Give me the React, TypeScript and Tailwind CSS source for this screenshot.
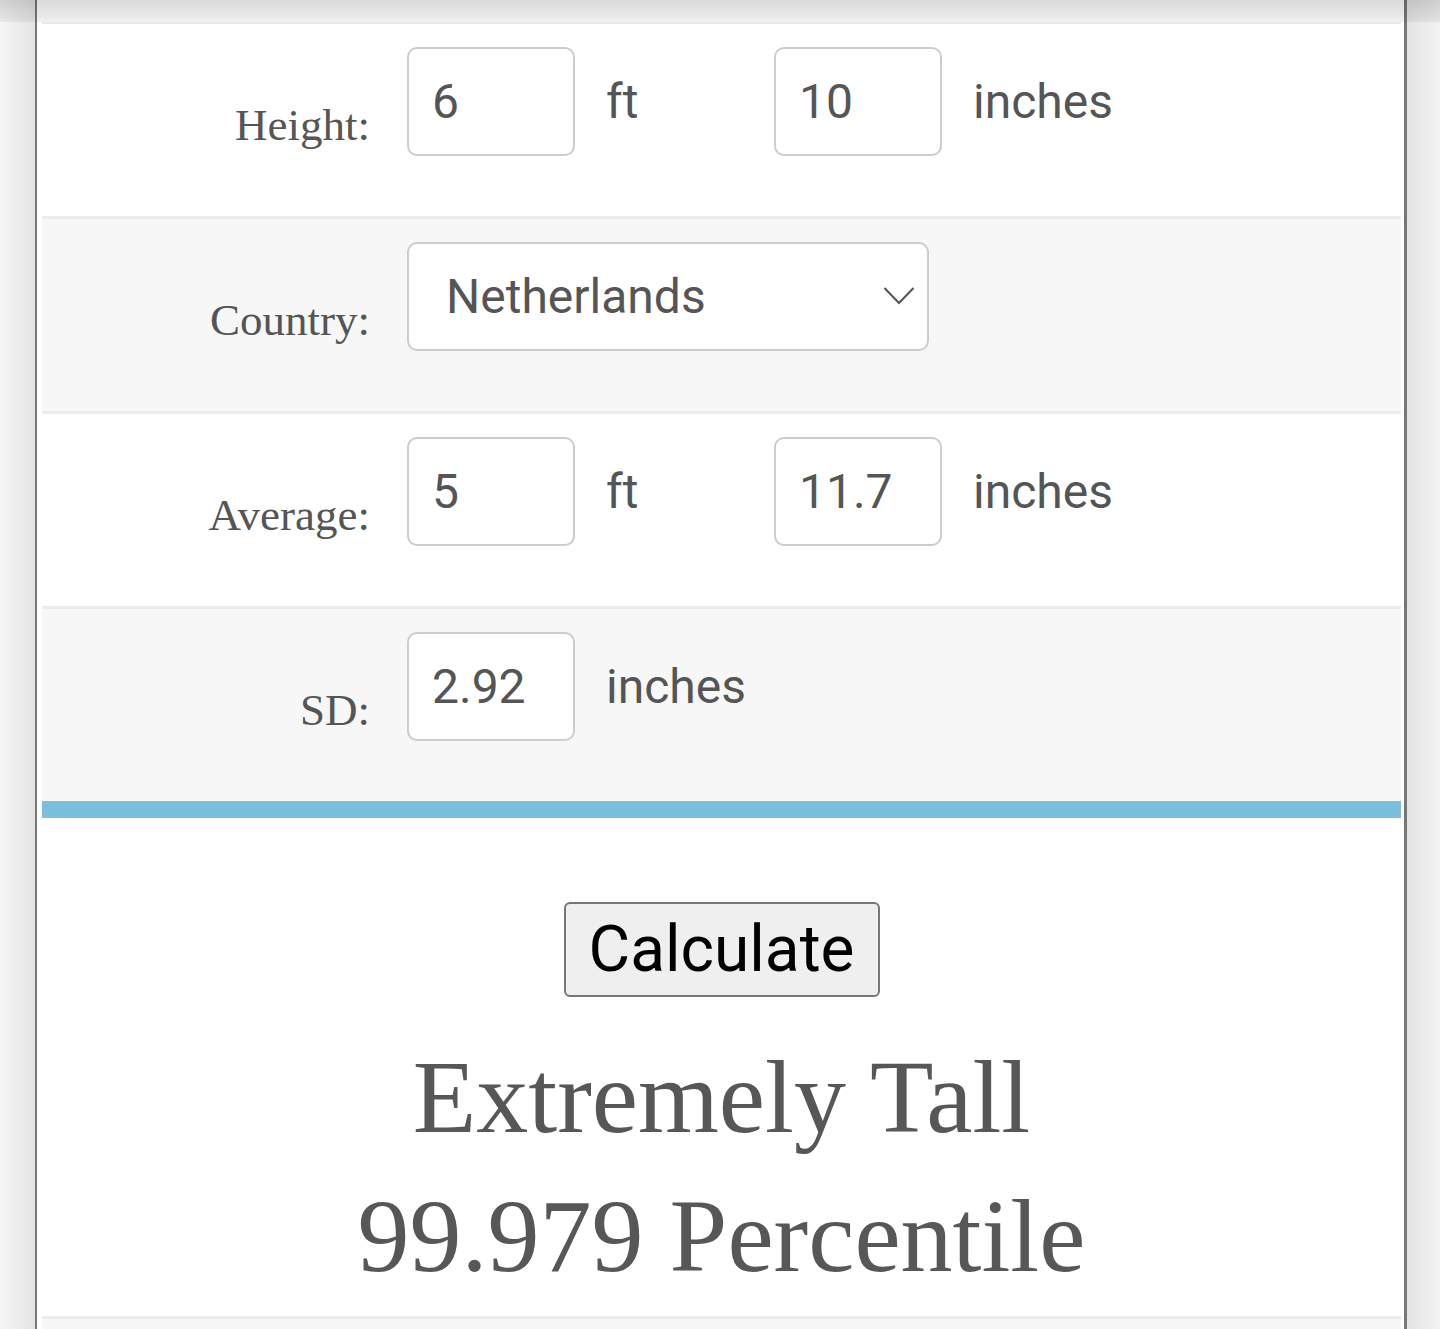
import React from "react";

const serif = { fontFamily: '"Liberation Serif", "Times New Roman", serif' } as const;
const sans = { fontFamily: 'Roboto, "Liberation Sans", Arial, sans-serif' } as const;

function Label({ text }: { text: string }) {
  return (
    <div
      className="w-[328px] shrink-0 text-right text-[45px] leading-[45px] text-[#555555] mt-[56px] pr-[-2px]"
      style={serif}
    >
      {text}
    </div>
  );
}

function Box({ value }: { value: string }) {
  return (
    <div
      className="w-[168px] h-[109px] shrink-0 rounded-[10px] border-2 border-[#cccccc] bg-white flex items-center pl-[23px] text-[48px] text-[#555555]"
      style={sans}
    >
      {value}
    </div>
  );
}

function Unit({ text, w }: { text: string; w?: string }) {
  return (
    <div className={`flex items-center h-[109px] pl-[31px] text-[48px] text-[#555555] ${w ?? ""}`} style={sans}>
      {text}
    </div>
  );
}

function Row({
  label,
  bg,
  first,
  children,
}: {
  label: string;
  bg: string;
  first?: boolean;
  children: React.ReactNode;
}) {
  return (
    <div
      className={`${first ? "h-[194px] border-t-2 border-[#e9e9e9]" : "h-[195px] border-t-[3px] border-[#ececec]"} ${bg} flex items-start pt-[23px]`}
    >
      <Label text={label} />
      <div className="ml-[37px] flex items-center">{children}</div>
    </div>
  );
}

export default function App() {
  return (
    <div className="relative w-[1440px] h-[1329px] overflow-hidden flex bg-[#eeeeee]">
      <div className="w-[35px] h-full bg-linear-to-r from-[#f6f6f6] to-[#e4e4e4]" />
      <div className="w-[1372px] h-full border-l-2 border-r-[3px] border-[#777777] bg-white pl-[5px] pr-[3px]">
        <div className="h-[22px]" />
        <Row label="Height:" bg="bg-white" first>
          <Box value="6" />
          <Unit text="ft" w="w-[199px]" />
          <Box value="10" />
          <Unit text="inches" />
        </Row>
        <Row label="Country:" bg="bg-[#f7f7f7]">
          <div
            className="w-[522px] h-[109px] rounded-[10px] border-2 border-[#cccccc] bg-white flex items-center justify-between pl-[37px] pr-[12px] text-[48px] text-[#555555]"
            style={sans}
          >
            <span>Netherlands</span>
            <svg width="32" height="20" viewBox="0 0 32 20" className="mt-[-2px]">
              <path d="M1.5 2 L16 17 L30.5 2" fill="none" stroke="#555555" strokeWidth="2" />
            </svg>
          </div>
        </Row>
        <Row label="Average:" bg="bg-white">
          <Box value="5" />
          <Unit text="ft" w="w-[199px]" />
          <Box value="11.7" />
          <Unit text="inches" />
        </Row>
        <Row label="SD:" bg="bg-[#f7f7f7]">
          <Box value="2.92" />
          <Unit text="inches" />
        </Row>
        <div className="h-[17px] bg-[#7bbfdf]" />
        <div className="h-[498px] bg-white flex flex-col items-center pt-[84px]">
          <button
            className="w-[316px] h-[95px] rounded-[6px] border-2 border-[#777777] bg-[#efefef] text-[64px] text-black flex items-center justify-center"
            style={sans}
          >
            Calculate
          </button>
          <div className="mt-[30px] text-center text-[104px] leading-[139px] text-[#575757]" style={serif}>
            <div>Extremely Tall</div>
            <div>99.979 Percentile</div>
          </div>
        </div>
        <div className="border-t-[3px] border-[#ececec] bg-[#f7f7f7] h-[20px]" />
      </div>
      <div className="flex-1 h-full bg-linear-to-r from-[#e4e4e4] to-[#f2f2f2]" />
      <div className="absolute top-0 left-0 right-0 h-[22px] bg-linear-to-b from-[rgba(0,0,0,0.15)] to-[rgba(0,0,0,0.06)] pointer-events-none" />
    </div>
  );
}
